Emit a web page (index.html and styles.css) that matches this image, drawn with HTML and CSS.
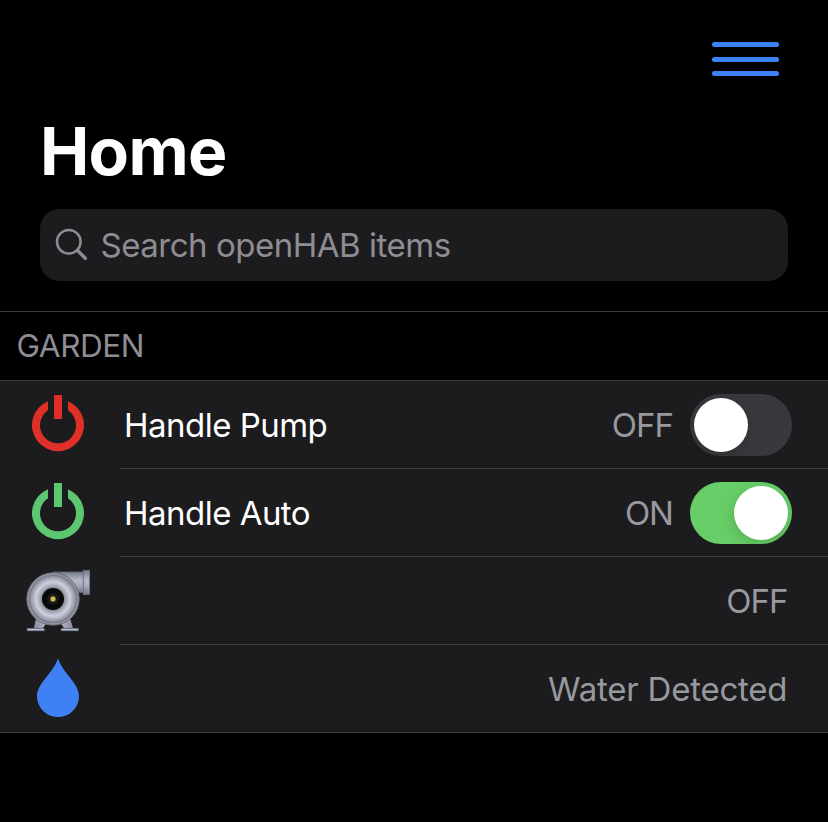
FILE: index.html
```html
<!DOCTYPE html>
<html lang="en">
<head>
<meta charset="utf-8">
<title>Home</title>
<link rel="stylesheet" href="styles.css">
</head>
<body>
<header class="header">
  <div class="menu" role="button" aria-label="Menu"><span></span><span></span><span></span></div>
  <h1 class="title">Home</h1>
  <div class="search">
    <svg class="search-icon" width="34" height="34" viewBox="0 0 34 34"><circle cx="13.8" cy="13.8" r="11.8"/><path d="M22.4 22.4 30.3 30.2" stroke-width="3.4"/></svg>
    <span class="placeholder">Search openHAB items</span>
  </div>
</header>
<main>
  <h2 class="section">GARDEN</h2>
  <ul class="list">
    <li class="row">
      <svg class="icon power-off" viewBox="0 0 64 64"><path d="M22 8.2A26 26 0 1 0 42 8.2V17.3A18 18 0 1 1 22 17.3Z"/><path d="M28 2h8v24h-8z"/></svg>
      <div class="cell">
        <span class="label">Handle Pump</span><span class="value state">OFF</span><span class="switch"></span>
      </div>
    </li>
    <li class="row">
      <svg class="icon power-on" viewBox="0 0 64 64"><path d="M22 8.2A26 26 0 1 0 42 8.2V17.3A18 18 0 1 1 22 17.3Z"/><path d="M28 2h8v24h-8z"/></svg>
      <div class="cell">
        <span class="label">Handle Auto</span><span class="value state">ON</span><span class="switch on"></span>
      </div>
    </li>
    <li class="row">
      <svg class="icon" viewBox="0 0 64 64">
        <defs>
          <linearGradient id="pipe" x1="0" y1="0" x2="0" y2="1"><stop offset="0" stop-color="#747887"/><stop offset=".4" stop-color="#b9bac9"/><stop offset=".65" stop-color="#aaaabc"/><stop offset="1" stop-color="#777989"/></linearGradient>
          <linearGradient id="foot"><stop offset="0" stop-color="#8a8c9c"/><stop offset=".5" stop-color="#cccddb"/><stop offset="1" stop-color="#8a8c9c"/></linearGradient>
          <radialGradient id="case"><stop offset=".42" stop-color="#74757f"/><stop offset=".55" stop-color="#a6a7b5"/><stop offset=".72" stop-color="#cfcfdd"/><stop offset=".88" stop-color="#a3a4b4"/><stop offset="1" stop-color="#858796"/></radialGradient>
        </defs>
        <path d="M10 49 8 59h9l5-7zM33 52l5 7h9l-3-10z" fill="url(#foot)"/>
        <path d="M1.2 59.4h17v2.3H1.2zM35.3 59.4h17v2.3h-17z" fill="#b9c4d4" stroke="#66758a" stroke-width=".7"/>
        <path d="M27 3h31v20.5H46z" fill="url(#pipe)" stroke="#687080" stroke-width=".7"/>
        <path d="M57.3 1.4h6.2v24h-6.2z" fill="url(#pipe)" stroke="#667487"/>
        <circle cx="27" cy="30" r="26.2" fill="#9697a6" stroke="#656b78"/>
        <circle cx="27" cy="30" r="23.7" fill="url(#case)" stroke="#7a7c8a" stroke-width="1.2"/>
        <circle cx="27" cy="30" r="11" fill="#080909"/>
        <circle cx="27" cy="30" r="6" fill="#171713"/>
        <circle cx="27" cy="30" r="2.7" fill="#cdbb55" stroke="#595740" stroke-width=".5"/>
      </svg>
      <div class="cell"><span class="value state last">OFF</span></div>
    </li>
    <li class="row">
      <svg class="icon water" viewBox="0 0 64 64"><path d="M32 1.2C36.5 16 53 26 53 39.3A21 20.7 0 0 1 11 39.3C11 26 27.5 16 32 1.2Z"/></svg>
      <div class="cell"><span class="value last">Water Detected</span></div>
    </li>
  </ul>
</main>
</body>
</html>
```

FILE: styles.css
```css
* { box-sizing: border-box; }
body {
  margin: 0;
  min-height: 822px;
  background: #000;
  color: #fff;
  font-family: Inter, "Liberation Sans", sans-serif;
  font-size: 33px;
}
.header {
  height: 311px;
  padding: 42px 40px 0;
}
.menu {
  width: 67px;
  margin: 0 9px 0 auto;
  display: grid;
  gap: 9.5px;
}
.menu span {
  height: 5px;
  border-radius: 3px;
  background: #3b82f7;
}
.title {
  margin: 35px 0 0;
  height: 80px;
  font-size: 66px;
  line-height: 80px;
  font-weight: 700;
  letter-spacing: -.7px;
}
.search {
  display: flex;
  align-items: center;
  height: 72px;
  margin-top: 18px;
  padding-left: 15px;
  border-radius: 20px;
  background: #1c1c1e;
  color: #8d8d93;
}
.search-icon {
  flex: none;
  fill: none;
  stroke: #8d8d93;
  stroke-width: 2.5;
  stroke-linecap: round;
  margin-right: 11.5px;
}
.placeholder {
  line-height: 40px;
  white-space: nowrap;
  letter-spacing: -.48px;
}
.section {
  height: 69px;
  margin: 0;
  padding-left: 16.5px;
  border-top: 1px solid #38383a;
  font-size: 31.5px;
  font-weight: 400;
  line-height: 67px;
  letter-spacing: -.45px;
  color: #8d8d93;
}
.list {
  margin: 0;
  padding: 0;
  list-style: none;
  background: #1c1c1e;
  border-top: 1px solid #3a3a3d;
}
.row {
  display: flex;
  height: 88px;
}
.row:last-child { border-bottom: 1px solid #3a3a3d; }
.row:last-child .cell { border-bottom: 0; }
.icon {
  flex: none;
  width: 64px;
  height: 64px;
  margin: 12px 30px 0 26px;
}
.power-off { fill: #de3029; }
.power-on { fill: #5cc671; }
.water { fill: #4080f5; }
.cell {
  flex: 1;
  display: flex;
  align-items: center;
  padding: 0 36px 0 4px;
  border-bottom: 1px solid #3d3d40;
}
.label {
  padding-top: 1px;
  line-height: 40px;
  letter-spacing: -.52px;
}
.value {
  margin-left: auto;
  padding-top: 1px;
  line-height: 40px;
  letter-spacing: -.22px;
  color: #98989f;
}
.state { letter-spacing: -1px; margin-right: 18px; }
.value.last { margin-right: 4.7px; }
.value.state.last { margin-right: 4.5px; }
.switch {
  width: 102px;
  height: 62px;
  margin-left: -1px;
  padding: 4px;
  border-radius: 31px;
  background: #39393d;
  overflow: hidden;
}
.switch::before {
  content: "";
  display: block;
  width: 54px;
  height: 54px;
  border-radius: 50%;
  background: #fff;
  box-shadow: 0 5px 14px rgba(0, 0, 0, .16);
}
.switch.on { background: #67ce67; }
.switch.on::before { margin-left: auto; }
```
